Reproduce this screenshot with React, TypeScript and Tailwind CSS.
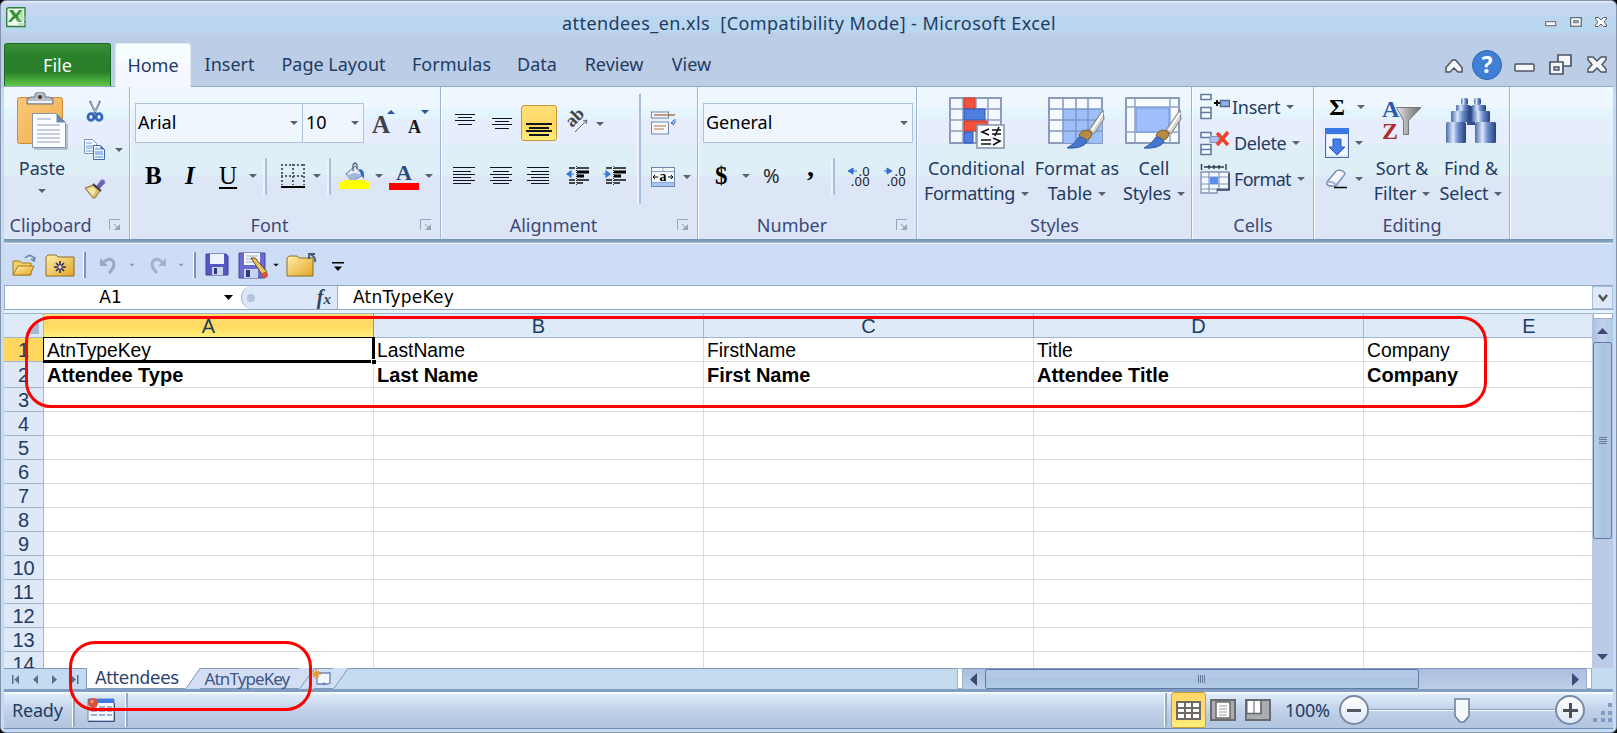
import React from "react";

const ui = "font-['Noto_Sans','Open_Sans',sans-serif]";

function Arrow({ className = "", color = "#5a6270" }: { className?: string; color?: string }) {
  return (
    <svg className={`block h-[4px] w-[8px] shrink-0 ${className}`} viewBox="0 0 8 4">
      <path d="M0 0h8L4 4z" fill={color} />
    </svg>
  );
}

function Launcher() {
  return (
    <svg className="block h-[12px] w-[12px]" viewBox="0 0 12 12" fill="none">
      <path d="M.5 11V.5H11" stroke="#9aa6b8" />
      <path d="M5 5l4 4" stroke="#8d97a8" />
      <path d="M11 5v6H5z" fill="#9aa3b2" />
    </svg>
  );
}

function Group({ label, width, launcher, labelClass = "", children }: { label: string; width: string; launcher?: boolean; labelClass?: string; children: React.ReactNode }) {
  return (
    <div className={`flex h-[152px] shrink-0 border-r border-white/80 ${width}`}>
      <div className="flex w-full flex-col border-r border-[#9db5cf]">
        <div className="h-[122px]">{children}</div>
        <div className="flex h-[30px] items-center pt-[2px]">
          <span className={`flex-1 text-center text-[18px] leading-[26px] text-[#3a4a78] ${labelClass}`}>{label}</span>
          {launcher && <div className="mr-[8px]"><Launcher /></div>}
        </div>
      </div>
    </div>
  );
}

function VSep({ className }: { className: string }) {
  return <div className={`w-[4px] shrink-0 border-r-2 border-l-2 border-r-[#a9bedb] border-l-[#f2f0fa] ${className}`} />;
}

function PasteIcon() {
  return (
    <svg className="block h-[58px] w-[52px]" viewBox="0 0 52 58">
      <defs>
        <linearGradient id="clip" x1="0" x2="1" y1="0" y2="1"><stop offset="0" stopColor="#fbc878" /><stop offset="1" stopColor="#eeaf52" /></linearGradient>
      </defs>
      <rect x="1.500" y="5.500" width="45" height="46" rx="2" fill="url(#clip)" stroke="#c98d3c" />
      <path d="M11 12V7l4-2h4V2l3-2h4l3 2v3h4l4 2v5z" fill="#b8bfca" stroke="#6d7480" />
      <circle cx="24" cy="5" r="2" fill="#4a3020" />
      <path d="M12 10h24" stroke="#eef1f5" strokeWidth="2" />
      <path d="M16.500 21.500h24l9 9v25h-33z" fill="#fbfcff" stroke="#8795aa" />
      <path d="M40.500 21.500v9h9z" fill="#6e86a8" />
      <path d="M21 27h14M21 33h23M21 38h23M21 42h23M21 46h23M21 50h23" stroke="#b3bfd3" strokeWidth="1.500" />
      <path d="M18 57h33V32" stroke="#8a93a5" fill="none" />
    </svg>
  );
}

function CutIcon() {
  return (
    <svg className="block h-[22px] w-[22px]" viewBox="0 0 22 22" fill="none">
      <path d="M6 1l6 13M16 1l-6 13" stroke="#5e7398" strokeWidth="2" />
      <path d="M7 2l4 10M15 2l-4 10" stroke="#dbe5f3" strokeWidth=".7" />
      <ellipse cx="7" cy="17" rx="3" ry="3.300" stroke="#3264bd" strokeWidth="2.800" />
      <ellipse cx="15" cy="17" rx="3" ry="3.300" stroke="#3264bd" strokeWidth="2.800" />
    </svg>
  );
}

function CopyIcon() {
  return (
    <svg className="block h-[22px] w-[22px]" viewBox="0 0 22 22">
      <path d="M.5.500h8l4 4v10H.5z" fill="#f7faff" stroke="#7d95bb" />
      <path d="M2 4h6M2 7h8M2 9h8M2 12h8" stroke="#6e9ad8" />
      <path d="M9.500 6.500h7l4 4v10h-11z" fill="#eef4ff" stroke="#3f6bb5" />
      <path d="M11 10h5M11 13h8M11 15h8M11 18h8" stroke="#5289d8" />
      <path d="M16.500 6.500v4h4z" fill="#3f6bb5" />
    </svg>
  );
}

function BrushIcon() {
  return (
    <svg className="block h-[20px] w-[22px]" viewBox="0 0 22 20">
      <path d="M12 8l5-7 3 0 1 3-7 7z" fill="#6a62b8" stroke="#8b84cc" />
      <path d="M1 9l8-3 7 6-5 7H9z" fill="#d9bd6a" stroke="#8c7433" />
      <path d="M3 10l6-2 3 3-3 6z" fill="#f6e6a5" />
      <path d="M9 5l8 7" stroke="#3c3b52" strokeWidth="2" />
    </svg>
  );
}

function BorderIcon() {
  return (
    <svg className="block h-[24px] w-[24px]" viewBox="0 0 24 24">
      <path d="M0 1h24M0 12h24" stroke="#555d68" strokeWidth="2" strokeDasharray="2 2" />
      <path d="M1 0v21M12 0v21M23 0v21" stroke="#555d68" strokeWidth="2" strokeDasharray="2 2" />
      <path d="M0 23h24" stroke="#000" strokeWidth="2" />
    </svg>
  );
}

function BucketIcon() {
  return (
    <svg className="block h-[28px] w-[30px]" viewBox="0 0 30 28">
      <path d="M7 12L16 4l8 9-11 6z" fill="#dfe9f8" stroke="#4d6d9f" />
      <path d="M8 13l8-2 7 2-10 6z" fill="#9fb9de" />
      <path d="M14 9V3q2-4 4 0v4" fill="none" stroke="#555f74" strokeWidth="1.300" />
      <path d="M20 7q6-1 5 10l-3-4z" fill="#2f6bd0" />
      <path d="M0 20h4l1-2h22v2h3v7H0z" fill="#ff0" />
    </svg>
  );
}

function Lines({ rows, w, h, sw = 1.3 }: { rows: number[][]; w: number; h: number; sw?: number }) {
  return (
    <svg className="block shrink-0" width={w} height={h} viewBox={`0 0 ${w} ${h}`} shapeRendering="crispEdges">
      {rows.map(([x, y, l], i) => (
        <rect key={i} x={x} y={y} width={l} height={sw} fill="#10141c" />
      ))}
    </svg>
  );
}

function OrientIcon() {
  return (
    <svg className="block h-[22px] w-[24px] overflow-visible" viewBox="0 0 24 22">
      <text x="0" y="0" transform="translate(6 17) rotate(-45)" fontFamily="Liberation Serif" fontWeight="bold" fontSize="18" fill="#444">ab</text>
      <path d="M9 21L21 9M21 9l-4 1M21 9l-1 4" stroke="#666" fill="none" />
    </svg>
  );
}

function IndentIcon({ right }: { right?: boolean }) {
  return (
    <svg className="block h-[20px] w-[24px] shrink-0" viewBox="0 0 24 20">
      <path d="M3 2h6M11 2h12M3 14h6M11 14h12M3 17h6M11 17h6" stroke="#111" strokeWidth="1.300" />
      <path d="M11 6h12M11 10h7" stroke="#000" strokeWidth="3" />
      <path d="M10.500 0v20" stroke="#333" strokeDasharray="1 1" />
      {right ? <path d="M0 8h4M3 5l4 3-4 3z" stroke="#3b75d8" fill="#3b75d8" strokeWidth="1.200" /> : <path d="M8 8H3M5 5L1 8l4 3z" stroke="#3b75d8" fill="#3b75d8" strokeWidth="1.200" />}
    </svg>
  );
}

function WrapIcon() {
  return (
    <svg className="block h-[24px] w-[25px]" viewBox="0 0 25 24" fill="none">
      <rect x=".5" y="1" width="17" height="6" fill="#f5f8ff" stroke="#7589a9" />
      <path d="M3 4h21" stroke="#9c5a2c" strokeWidth="1.200" />
      <rect x=".5" y="11" width="17" height="12" fill="#f5f8ff" stroke="#7589a9" />
      <path d="M3 15h12M3 18h10" stroke="#b9763f" strokeWidth="1.200" />
      <path d="M24 8v4h-3M23 9l-3 3 3 2" stroke="#3764b0" />
    </svg>
  );
}

function MergeIcon() {
  return (
    <svg className="block h-[20px] w-[24px] overflow-visible" viewBox="0 0 24 20">
      <rect x=".5" y=".5" width="23" height="19" fill="#f4f8ff" stroke="#7188ad" />
      <path d="M1 4.500h22M1 15.500h22M12 1v4M12 15v4" stroke="#88a5d5" />
      <path d="M1 16h22v3H1z" fill="#a9c6f3" />
      <path d="M2 10h5M17 10h5M4 8l-2 2 2 2M20 8l2 2-2 2" stroke="#000" fill="none" />
      <text x="8.500" y="14" fontFamily="Liberation Serif" fontWeight="bold" fontSize="14">a</text>
    </svg>
  );
}

function DecimalIcon({ right }: { right?: boolean }) {
  return (
    <div className="flex h-[20px] w-[22px] shrink-0 flex-col text-[13px] leading-[10px] tracking-[0.300px] text-[#222]">
      <div className="flex h-[10px] items-center justify-between">
        <svg className="block h-[8px] w-[9px]" viewBox="0 0 9 8">
          {right ? <path d="M0 4h5M3 1l5 3-5 3z" stroke="#2e68cc" fill="#3b75d8" /> : <path d="M9 4H4M5 1L0 4l5 3z" stroke="#2e68cc" fill="#3b75d8" />}
        </svg>
        <span>.0</span>
      </div>
      <span className="text-right">.00</span>
    </div>
  );
}

function PaintBrush() {
  return (
    <g>
      <path d="M55 13L41 33l5 4L56 22z" fill="#d2d2cf" stroke="#777b80" />
      <path d="M55 16L44 33" stroke="#fff" strokeWidth="2" />
      <path d="M31 38q4-7 11-4 4 3-1 8l-6 3z" fill="#b58a43" stroke="#7d5c28" />
      <path d="M31 40q6 0 8 5-5 7-20 6 7-3 12-11z" fill="#4478cf" stroke="#2d5aa8" />
    </g>
  );
}

function CondIcon() {
  return (
    <svg className="block h-[52px] w-[56px]" viewBox="0 0 56 52">
      <rect x="1" y="1" width="51" height="45" fill="#f5f8fe" stroke="#8a9bbb" strokeWidth="2" />
      <path d="M14 1v45M27 1v45M39 1v45M1 12h51M1 23h51M1 34h51" stroke="#8b9dbf" strokeWidth="1.500" />
      <path d="M15 1h11v11H15z" fill="#f4503c" stroke="#d73423" />
      <path d="M15 12h21v11H15z" fill="#4f7ee0" stroke="#2a56ba" />
      <path d="M15 24h23v10H15z" fill="#f4503c" stroke="#d73423" />
      <path d="M15 35h9v11h-9z" fill="#4f7ee0" stroke="#2a56ba" />
      <rect x="28" y="28" width="27" height="23" fill="#fbfcff" stroke="#8390a5" strokeWidth="1.500" />
      <path d="M40 32l-7 3 7 3M32 43h10M32 47h10M43 33h9M43 37h9M50 30l-4 9M44 41l7 3-7 4" stroke="#111" fill="none" strokeWidth="1.600" />
    </svg>
  );
}

function TableIcon() {
  return (
    <svg className="block h-[52px] w-[58px]" viewBox="0 0 58 52">
      <rect x="1" y="1" width="53" height="45" fill="#f7faff" stroke="#8a9bbb" strokeWidth="2" />
      <path d="M15 12h39v34H15z" fill="#9dc0fb" />
      <path d="M15 1v45M28 1v45M40 1v45M1 12h53M1 23h53M1 34h53" stroke="#7d97c8" strokeWidth="1.500" />
      <PaintBrush />
    </svg>
  );
}

function CellStyleIcon() {
  return (
    <svg className="block h-[52px] w-[58px]" viewBox="0 0 58 52">
      <rect x="1" y="1" width="53" height="45" fill="#f7faff" stroke="#8a9bbb" strokeWidth="2" />
      <path d="M10 1v45M45 1v45M1 10h53M1 35h53" stroke="#93a5c6" strokeWidth="1.500" />
      <path d="M11 11h33v24H11z" fill="#9fbffa" stroke="#6d93dc" />
      <PaintBrush />
    </svg>
  );
}

function InsertCells() {
  return (
    <svg className="block h-[27px] w-[30px]" viewBox="0 0 30 27">
      <path d="M1 1.500h10v5H1zM1 14.500h10v5H1zM1 19.500h10v6H1z" fill="#f7faff" stroke="#64799b" strokeWidth="1.600" />
      <path d="M14 10h6M17 7v6" stroke="#000" strokeWidth="1.800" />
      <path d="M20.500 7.500h9v6h-9z" fill="#8fb2ef" stroke="#56698a" strokeWidth="1.500" />
    </svg>
  );
}

function DeleteCells() {
  return (
    <svg className="block h-[25px] w-[30px]" viewBox="0 0 30 25">
      <path d="M1 1.500h10v5H1zM1 13.500h10v5H1zM1 18.500h10v5H1z" fill="#f7faff" stroke="#64799b" strokeWidth="1.600" />
      <path d="M10 5.500h9v6h-9z" fill="#a9c4f3" stroke="#7f96be" />
      <path d="M17 2l11 12M28 1L17 14" stroke="#f0432a" strokeWidth="3.500" />
    </svg>
  );
}

function FormatCells() {
  return (
    <svg className="block h-[30px] w-[30px]" viewBox="0 0 30 30">
      <path d="M1.500 0v6M26 0v6M4 3h20M9 1v4M14 1v4M19 1v4" stroke="#2d3a4d" strokeWidth="1.400" />
      <path d="M1 8h28v17H17v4H1z" fill="#f3f7ff" stroke="#8496b3" strokeWidth="1.400" />
      <path d="M9 8v20M19 8v17M1 13h28M1 20h28M1 25h28" stroke="#8496b3" strokeWidth="1.200" />
      <path d="M10 13h8v7h-8z" fill="#5a8df0" />
      <path d="M17 26h12V9" fill="none" stroke="#33435b" strokeWidth="1.500" />
    </svg>
  );
}

function FillIcon() {
  return (
    <svg className="block h-[30px] w-[24px]" viewBox="0 0 24 30">
      <rect x=".5" y=".5" width="23" height="29" fill="#dfe9fc" stroke="#4c6ba5" />
      <path d="M0 0h24v6H0z" fill="#3c77e6" />
      <path d="M2 7h20v20H2z" fill="#fff" opacity=".6" />
      <path d="M8 11h8v8h4l-8 8-8-8h4z" fill="#477fe9" stroke="#2a5cc0" />
    </svg>
  );
}

function EraserIcon() {
  return (
    <svg className="block h-[20px] w-[24px]" viewBox="0 0 24 20">
      <path d="M2 13L11 2q4-2 8 1l1 2-9 12H5q-4-1-3-4z" fill="#f4f7fd" stroke="#6f87b0" strokeWidth="1.300" />
      <path d="M3 13q5-1 8 3L20 5" fill="none" stroke="#8fa6cf" strokeWidth="1.500" />
      <path d="M9 18.500h13" stroke="#000" strokeWidth="1.500" />
    </svg>
  );
}

function SortIcon() {
  return (
    <div className="flex h-[40px] w-[40px] font-['Liberation_Serif'] text-[24px] font-bold">
      <div className="flex w-[15px] flex-col">
        <span className="h-[20px] leading-[18px] text-[#2b58ae]">A</span>
        <span className="h-[20px] leading-[22px] text-[#ac2d2a]">Z</span>
      </div>
      <svg className="mt-[7px] -ml-px block h-[28px] w-[26px] shrink-0" viewBox="0 0 26 28">
        <defs>
          <linearGradient id="funnel"><stop offset="0" stopColor="#e9e9e9" /><stop offset=".5" stopColor="#a3a3a3" /><stop offset="1" stopColor="#6c6c6c" /></linearGradient>
        </defs>
        <path d="M.5.500h24.500L12.500 13.500v14h-5v-14z" fill="url(#funnel)" stroke="#777" />
      </svg>
    </div>
  );
}

function FindIcon() {
  return (
    <svg className="block h-[47px] w-[52px]" viewBox="0 0 52 47">
      <defs>
        <linearGradient id="bino"><stop offset="0" stopColor="#4c6ba8" /><stop offset=".35" stopColor="#dbe7fb" /><stop offset=".6" stopColor="#6d8fd0" /><stop offset="1" stopColor="#263f78" /></linearGradient>
      </defs>
      <path d="M22 9h8v19h-8z" fill="#324f8c" />
      <rect x="16" y="1" width="7" height="7" rx="2" fill="url(#bino)" />
      <rect x="29" y="1" width="7" height="7" rx="2" fill="url(#bino)" />
      <rect x="11" y="8" width="14" height="6" rx="1" fill="url(#bino)" />
      <rect x="27" y="8" width="14" height="6" rx="1" fill="url(#bino)" />
      <rect x="6" y="14" width="19" height="11" rx="1" fill="url(#bino)" />
      <rect x="27" y="14" width="18" height="11" rx="1" fill="url(#bino)" />
      <rect x="1" y="25" width="20" height="21" rx="1.500" fill="url(#bino)" />
      <rect x="30" y="25" width="21" height="21" rx="1.500" fill="url(#bino)" />
    </svg>
  );
}

function BigButton({ icon, top, bottom, width, pt, bottomClass = "" }: { icon: React.ReactNode; top: string; bottom: string; width: string; pt: string; bottomClass?: string }) {
  return (
    <div className={`flex h-[122px] shrink-0 flex-col items-center whitespace-nowrap text-[18px] leading-[25px] text-[#1e3c63] ${width}`}>
      <div className={`h-[69px] ${pt}`}>{icon}</div>
      <div>{top}</div>
      <div className="flex items-center">
        <span className={bottomClass}>{bottom}</span>
        <Arrow className="ml-[6px]" />
      </div>
    </div>
  );
}

function Ribbon() {
  return (
    <div className="flex h-[152px] bg-[linear-gradient(to_bottom,#f0f7fe_0px,#eef7fe_20px,#e3f4fd_24px,#e3f5fe_30px,#e6edfc_33px,#e6edfc_56px,#deeef7_60px,#dfeff6_86px,#dde6f7_92px,#dde6f7_152px)]">
      <Group label="Clipboard" width="w-[127px]" launcher labelClass="pr-[12px]">
        <div className="flex">
          <div className="flex w-[76px] flex-col items-center pt-[5px]">
            <PasteIcon />
            <span className="mt-[6px] text-[18px] leading-[25px] text-[#1e3c63]">Paste</span>
            <Arrow className="mt-[8px]" />
          </div>
          <div className="flex w-[27px] flex-col pt-[13px] pl-[4px]">
            <CutIcon />
            <div className="mt-[17px]"><CopyIcon /></div>
            <div className="mt-[18px]"><BrushIcon /></div>
          </div>
          <Arrow className="mt-[61px] ml-[8px]" />
        </div>
      </Group>

      <Group label="Font" width="w-[311px]" launcher labelClass="pr-[12px]">
        <div className="flex h-[56px] items-end pl-[4px]">
          <div className="flex h-[40px] w-[168px] items-center justify-between border border-[#b0c4de] bg-[#f0f6fe] pr-[4px] pl-[2px] text-[18px] leading-[26px] text-black">
            <span className="pb-[3px]">Arial</span><Arrow />
          </div>
          <div className="-ml-px flex h-[40px] w-[62px] items-center justify-between border border-[#b0c4de] bg-[#f0f6fe] pr-[4px] pl-[3px] text-[18px] leading-[26px] text-black">
            <span className="pb-[3px]">10</span><Arrow />
          </div>
          <div className="ml-[8px] flex h-[33px] items-start self-end">
            <span className="font-['Liberation_Serif'] text-[25px] leading-[30px] font-bold text-[#3d4149]">A</span>
            <Arrow className="-ml-[3px] rotate-180" color="#2a52a0" />
          </div>
          <div className="ml-[13px] flex h-[33px] items-start self-end">
            <span className="pt-[4px] font-['Liberation_Serif'] text-[18px] leading-[26px] font-bold text-[#15181d]">A</span>
            <Arrow color="#2a52a0" />
          </div>
        </div>
        <div className="flex h-[66px] items-center font-['Liberation_Serif'] text-[25px]">
          <span className="ml-[14px] w-[18px] font-bold">B</span>
          <span className="ml-[22px] w-[14px] font-bold italic">I</span>
          <span className="ml-[20px] w-[18px] underline underline-offset-[3px]">U</span>
          <Arrow className="ml-[12px]" />
          <VSep className="ml-[6px] h-[37px]" />
          <div className="ml-[14px]"><BorderIcon /></div>
          <Arrow className="ml-[8px]" />
          <VSep className="ml-[6px] h-[37px]" />
          <div className="ml-[8px]"><BucketIcon /></div>
          <Arrow className="ml-[6px]" />
          <div className="ml-[6px] flex w-[30px] flex-col items-center">
            <span className="text-[22px] leading-[21px] font-bold text-[#2c4a80]">A</span>
            <div className="h-[7px] w-[30px] bg-[#f00]" />
          </div>
          <Arrow className="ml-[6px]" />
        </div>
      </Group>

      <Group label="Alignment" width="w-[257px]" launcher labelClass="pr-[12px]">
        <div className="flex">
          <div className="w-[195px]">
            <div className="flex h-[66px] items-center">
              <div className="ml-[13px]"><Lines w={20} h={12} rows={[[0, 0, 20], [3, 3, 14], [0, 6, 20], [3, 10, 14]]} /></div>
              <div className="mt-[8px] ml-[17px]"><Lines w={20} h={12} rows={[[0, 0, 20], [3, 3, 14], [0, 6, 20], [3, 10, 14]]} /></div>
              <div className="mt-[6px] ml-[9px] flex h-[36px] w-[36px] items-end justify-center rounded-[3px] border border-[#c6963c] bg-[linear-gradient(#ffe07a,#ffd862_60%,#fff07c)] pb-[3px]">
                <Lines w={26} h={14} sw={2} rows={[[0, 0, 26], [3, 4, 20], [0, 7, 26], [3, 11, 20]]} />
              </div>
              <div className="mt-[4px] ml-[9px]"><OrientIcon /></div>
              <Arrow className="mt-[7px] ml-[6px]" />
            </div>
            <div className="flex h-[46px] items-center">
              <div className="ml-[11px]"><Lines w={22} h={18} rows={[[0, 0, 22], [0, 4, 18], [0, 7, 22], [0, 10, 18], [0, 13, 22], [0, 16, 18]]} /></div>
              <div className="ml-[15px]"><Lines w={22} h={18} rows={[[0, 0, 22], [3, 4, 16], [0, 7, 22], [3, 10, 16], [0, 13, 22], [3, 16, 16]]} /></div>
              <div className="ml-[15px]"><Lines w={22} h={18} rows={[[0, 0, 22], [4, 4, 18], [0, 7, 22], [4, 10, 18], [0, 13, 22], [4, 16, 18]]} /></div>
              <div className="ml-[17px]"><IndentIcon /></div>
              <div className="ml-[13px]"><IndentIcon right /></div>
            </div>
          </div>
          <VSep className="mt-[7px] h-[110px]" />
          <div className="ml-[10px] pt-[24px]">
            <WrapIcon />
            <div className="mt-[32px] flex items-center">
              <MergeIcon />
              <Arrow className="ml-[8px]" />
            </div>
          </div>
        </div>
      </Group>

      <Group label="Number" width="w-[219px]" launcher labelClass="pr-[11px]">
        <div className="flex h-[56px] items-end pl-[4px]">
          <div className="flex h-[40px] w-[210px] items-center justify-between border border-[#b0c4de] bg-[#f0f6fe] pr-[4px] pl-[2px] text-[18px] leading-[26px] text-black">
            <span className="pb-[3px]">General</span><Arrow />
          </div>
        </div>
        <div className="flex h-[66px] items-center">
          <span className="ml-[16px] w-[12px] font-['Liberation_Serif'] text-[25px] font-bold">$</span>
          <Arrow className="ml-[15px]" />
          <span className="ml-[13px] w-[19px] text-[20px] text-[#2b2b2b]">%</span>
          <span className="-mt-[18px] ml-[25px] w-[10px] font-['Liberation_Serif'] text-[28px] leading-[32px] font-bold">,</span>
          <VSep className="ml-[14px] h-[37px]" />
          <div className="ml-[13px]"><DecimalIcon /></div>
          <div className="ml-[14px]"><DecimalIcon right /></div>
        </div>
      </Group>

      <Group label="Styles" width="w-[275px]">
        <div className="flex pl-px">
          <BigButton width="w-[115px]" pt="pt-[10px]" icon={<CondIcon />} top="Conditional" bottom="Formatting" bottomClass="tracking-[-0.350px]" />
          <BigButton width="w-[86px]" pt="pt-[10px]" icon={<TableIcon />} top="Format as" bottom="Table" />
          <BigButton width="w-[68px]" pt="pt-[10px]" icon={<CellStyleIcon />} top="Cell" bottom="Styles" bottomClass="tracking-[-0.200px]" />
        </div>
      </Group>

      <Group label="Cells" width="w-[122px]">
        <div className="pl-[7px] text-[18px] leading-[36px] text-[#1e3c63]">
          <div className="flex h-[39px] items-center"><InsertCells /><span className="ml-[2px] tracking-[-0.300px]">Insert</span><Arrow className="ml-[6px]" /></div>
          <div className="flex h-[34px] items-center"><DeleteCells /><span className="ml-[4px] tracking-[-0.400px]">Delete</span><Arrow className="ml-[6px]" /></div>
          <div className="flex h-[38px] items-center"><FormatCells /><span className="ml-[4px] tracking-[-0.700px]">Format</span><Arrow className="ml-[6px]" /></div>
        </div>
      </Group>

      <Group label="Editing" width="w-[196px]">
        <div className="flex">
          <div className="w-[52px] pl-[10px]">
            <div className="flex h-[40px] items-center"><span className="w-[24px] text-center font-['Liberation_Serif'] text-[24px] font-bold">Σ</span><Arrow className="ml-[8px]" /></div>
            <div className="flex h-[32px] items-center"><FillIcon /><Arrow className="ml-[6px]" /></div>
            <div className="flex h-[40px] items-center"><EraserIcon /><Arrow className="ml-[6px]" /></div>
          </div>
          <BigButton width="w-[70px]" pt="pt-[13px]" icon={<SortIcon />} top="Sort &" bottom="Filter" />
          <BigButton width="w-[68px]" pt="pt-[10px]" icon={<FindIcon />} top="Find &" bottom="Select" bottomClass="tracking-[-0.200px]" />
        </div>
      </Group>
    </div>
  );
}

function FolderIcon({ w, children }: { w: number; children?: React.ReactNode }) {
  return (
    <svg className="block shrink-0" width={w} height="24" viewBox={`0 0 ${w} 24`}>
      <defs>
        <linearGradient id="fold" x1="0" y1="0" x2="1" y2="1"><stop offset="0" stopColor="#fff0a8" /><stop offset="1" stopColor="#e3a526" /></linearGradient>
      </defs>
      {children}
    </svg>
  );
}

function QuickAccess() {
  return (
    <div className="flex h-[42px] items-center border-t border-[#eaf2fd] bg-[#cdddf6] pt-px">
      <div className="ml-[8px]">
        <FolderIcon w={24}>
          <path d="M1 22V8h7l2 2h9v12z" fill="#f3cf68" stroke="#a37a1d" />
          <path d="M1 22l5-9h16l-4 9z" fill="url(#fold)" stroke="#a37a1d" />
          <path d="M13 5q5-5 9 0v3M19 6l3 2 1-4" fill="none" stroke="#5a7fae" strokeWidth="1.500" />
        </FolderIcon>
      </div>
      <div className="ml-[9px]">
        <FolderIcon w={30}>
          <path d="M1 4l2-2h8l2 2h16v19H1z" fill="url(#fold)" stroke="#8f6d22" />
          <path d="M15 8v12M9 14h12M11 10l8 8M19 10l-8 8" stroke="#27296f" strokeWidth="1.600" />
          <circle cx="15" cy="14" r="1.800" fill="#ffe9a0" />
        </FolderIcon>
      </div>
      <div className="ml-[8px] h-[26px] w-[3px] border-r-2 border-l border-r-[#8592a8] border-l-white" />
      <svg className="ml-[13px] block h-[18px] w-[18px]" viewBox="0 0 18 18" fill="none"><path d="M5 6q5-5 9-1 3 5-4 12" stroke="#98a8c2" strokeWidth="3" /><path d="M1 2v8h8z" fill="#98a8c2" /></svg>
      <Arrow className="ml-[11px] scale-75" color="#8d9ab0" />
      <svg className="ml-[13px] block h-[18px] w-[18px]" viewBox="0 0 18 18" fill="none"><path d="M13 6Q8 1 4 5q-3 5 4 12" stroke="#a3b2ca" strokeWidth="3" /><path d="M17 2v8H9z" fill="#a3b2ca" /></svg>
      <Arrow className="ml-[10px] scale-75" color="#8d9ab0" />
      <div className="ml-[8px] h-[26px] w-[3px] border-r-2 border-l border-r-[#8592a8] border-l-white" />
      <svg className="ml-[9px] block h-[24px] w-[24px]" viewBox="0 0 24 24">
        <path d="M1 1h20l2 2v19H1z" fill="#5558c2" stroke="#3c3d98" />
        <path d="M5 1h14v10H5z" fill="#eef3fc" />
        <path d="M7 14h11v8H7z" fill="#cdd5ea" /><path d="M9 15h3v6H9z" fill="#34357f" />
      </svg>
      <svg className="ml-[9px] block h-[27px] w-[31px]" viewBox="0 0 31 27">
        <path d="M1 1h26v25H1z" fill="#6a6cd0" stroke="#4546a4" />
        <path d="M6 1h16v12H6z" fill="#f6f8fc" /><path d="M8 4h12M8 7h12M8 10h12" stroke="#a4abc0" />
        <path d="M6 17h14v9H6z" fill="#c9d2ee" /><path d="M8 18h4v7H8z" fill="#34357f" />
        <path d="M13 6l4 0 12 14-4 4z" fill="#e9c763" stroke="#5b4a25" />
        <circle cx="27" cy="23" r="3" fill="#d0563e" />
      </svg>
      <Arrow className="ml-[3px] scale-75" color="#111" />
      <div className="ml-[6px]">
        <FolderIcon w={31}>
          <path d="M1 5l2-2h8l2 2h14v18H1z" fill="url(#fold)" stroke="#8f6d22" />
          <path d="M29 9q1-5-4-7M23 6V1h6" fill="none" stroke="#3f5878" strokeWidth="1.800" />
        </FolderIcon>
      </div>
      <svg className="mt-[3px] ml-[15px] block h-[9px] w-[12px]" viewBox="0 0 12 9"><path d="M0 0h12v1.500H0zM2 4.500h8L6 9z" fill="#000" /></svg>
    </div>
  );
}

function FormulaBar() {
  return (
    <div className="flex h-[25px] border-y border-[#8fa6c6] bg-white font-['DejaVu_Sans','Liberation_Sans',sans-serif] text-[17px] text-black">
      <div className="flex w-[237px] items-center border-l border-[#9db2d0]">
        <span className="w-[211px] text-center leading-[23px]">A1</span>
        <svg className="ml-[8px] block h-[5px] w-[9px]" viewBox="0 0 9 5"><path d="M0 0h9L4.500 5z" /></svg>
      </div>
      <div className="flex w-[97px] items-center justify-between rounded-l-full border-r border-l border-[#9db2d0] bg-[#dce8f9] pr-[6px] pl-[5px]">
        <div className="h-[8px] w-[8px] rounded-full bg-[#b4c4dc]" />
        <span className="font-['Liberation_Serif'] text-[20px] leading-[20px] font-bold text-[#33465f] italic">f<span className="text-[15px]">x</span></span>
      </div>
      <span className="ml-[15px] flex-1 leading-[23px] tracking-[0.250px]">AtnTypeKey</span>
      <div className="flex w-[21px] items-center justify-center border border-[#a9bedb] bg-[#dde9f8]">
        <svg className="block h-[8px] w-[10px]" viewBox="0 0 10 8"><path d="M1 1l4 5 4-5" fill="none" stroke="#555" strokeWidth="2.500" /></svg>
      </div>
    </div>
  );
}

const cols = ["w-[330px]", "w-[330px]", "w-[330px]", "w-[330px]", "flex-1"];
const letters = ["A", "B", "C", "D", "E"];
const data = [
  ["AtnTypeKey", "LastName", "FirstName", "Title", "Company"],
  ["Attendee Type", "Last Name", "First Name", "Attendee Title", "Company"],
];

function Sheet() {
  return (
    <div className="h-[355px] w-[1588px] overflow-hidden bg-white font-['Liberation_Sans',Arial,sans-serif] text-[19.300px]">
      <div className="flex h-[25px] border-t border-b border-[#9eb6ce] bg-[#dfeaf8] text-[20px] leading-[25px] text-[#1e3c63]">
        <div className="flex w-[40px] items-end justify-end border-r border-[#9eb6ce] pr-[4px] pb-[3px]">
          <svg className="block h-[14px] w-[14px]" viewBox="0 0 14 14"><path d="M14 0v14H0z" fill="#a9b9d3" /></svg>
        </div>
        {letters.map((l, i) => (
          <div key={i} className={`${cols[i]} text-center ${i === 0 ? "border-r border-[#c98f2d] bg-[linear-gradient(#ffe07b,#ffd95f_50%,#fff07c)]" : i < 4 ? "border-r border-[#9eb6ce]" : "pl-[102px]"}`}>
            {l}
          </div>
        ))}
      </div>
      {Array.from({ length: 14 }, (_, r) => (
        <div key={r} className={`flex ${r === 1 ? "h-[26px] leading-[27px]" : "h-[24px] leading-[25px]"}`}>
          <div className={`w-[40px] overflow-hidden border-r border-b border-[#9eb6ce] text-center text-[20px] text-[#1e3c63] ${r === 0 ? "bg-[#ffd75e]" : "bg-[#dfe8f7]"}`}>{r + 1}</div>
          {cols.map((c, i) => (
            <div key={i} className={`${c} border-b border-[#dadcdd] pl-[3px] whitespace-nowrap ${i < 4 ? "border-r" : ""} ${r === 1 ? "text-[20px] font-bold" : ""}`}>
              {r < 2 ? data[r][i] : ""}
            </div>
          ))}
        </div>
      ))}
    </div>
  );
}

function VScroll() {
  return (
    <div className="flex h-[355px] w-[21px] flex-col items-center bg-[#bccbe5]">
      <div className="h-[6px] w-[20px] border border-[#9eb3cf] bg-white" />
      <div className="flex h-[23px] w-full items-center justify-center bg-[linear-gradient(to_right,#aebfdc,#c3d1ec_50%,#aecbe4)]">
        <svg className="block h-[6px] w-[11px]" viewBox="0 0 11 6"><path d="M0 6L5.500 0 11 6z" fill="#3f4a77" /></svg>
      </div>
      <div className="flex h-[197px] w-[19px] items-center justify-center rounded-[2px] border border-[#5f7ba5] bg-[linear-gradient(to_right,#b9d0ea,#a8c4e0_50%,#b0c4e4)]">
        <div className="h-[8px] w-[8px] bg-[repeating-linear-gradient(#66799a_0px_1px,transparent_1px_2px)]" />
      </div>
      <div className="flex-1" />
      <svg className="mb-[8px] block h-[6px] w-[11px]" viewBox="0 0 11 6"><path d="M0 0h11L5.500 6z" fill="#3f4a77" /></svg>
    </div>
  );
}

function Slant({ left, right }: { left: string; right: string }) {
  return (
    <svg className="block h-[21px] w-[15px] shrink-0" viewBox="0 0 15 21">
      <path d="M0 0h15L1 20H0z" fill={left} />
      <path d="M15 0v20H1z" fill={right} />
      <path d="M15 .5L1 20.500" stroke="#7f98bd" />
    </svg>
  );
}

function SheetTabs() {
  return (
    <div className="flex h-[21px] bg-[#c5dcf0]">
      <div className="flex h-[21px] w-[83px] items-center border-t border-r border-[#7f98bd] pl-[8px]">
        <svg className="block h-[9px] w-[68px]" viewBox="0 0 68 9" fill="#566c90">
          <path d="M0 0h1.500v9H0zM7 0v9L2.500 4.500zM26 0v9l-5-4.500zM40 0v9l5-4.500zM59 0v9l5-4.500zM65 0h1.500v9H65z" />
        </svg>
      </div>
      <div className="flex w-[98px] items-center justify-center border-b border-[#7f98bd] bg-white pl-[2px] font-['DejaVu_Sans'] text-[17px] leading-[20px] whitespace-nowrap text-[#27406c]">
        <span className="tracking-[-0.300px]">Attendees</span>
      </div>
      <Slant left="#ffffff" right="#d3def4" />
      <div className="flex w-[99px] items-center justify-center border-t border-b border-[#7f98bd] bg-[#d3def4] pr-[5px] text-[17px] leading-[20px] whitespace-nowrap text-[#3f5686]">
        <span className="tracking-[-0.900px]">AtnTypeKey</span>
      </div>
      <Slant left="#d3def4" right="#cfdff4" />
      <div className="w-[19px] border-t border-b border-[#7f98bd] bg-[#cfdff4]">
        <svg className="-ml-[2px] block h-[18px] w-[21px]" viewBox="0 0 21 18">
          <path d="M5 4h13v10l-3 1H5z" fill="#f5f8ff" stroke="#6f86ac" strokeWidth="1.300" />
          <path d="M9 16l3-3 3 3z" fill="#6f86ac" />
          <path d="M4 0v10M0 5h9M1 2l6 6M7 2L1 8" stroke="#e79a2b" strokeWidth="1.400" />
        </svg>
      </div>
      <Slant left="#cfdff4" right="#c5dcf0" />
      <div className="flex-1 border-t border-[#7f98bd]" />
      <div className="h-[21px] w-[6px] border border-[#9eb3cf] bg-white" />
      <div className="flex h-[21px] w-[623px] items-center border-t border-[#7f98bd] bg-[linear-gradient(#a9bedb,#bccfe8)]">
        <svg className="ml-[7px] block h-[13px] w-[7px]" viewBox="0 0 7 13"><path d="M7 0v13L0 6.500z" fill="#3b4a78" /></svg>
        <div className="ml-[8px] flex h-[20px] w-[434px] items-center justify-center rounded-[2px] border border-[#5f7ba5] bg-[linear-gradient(#b3c8e6,#b0c8e6_45%,#a8c4e0_50%,#b3cbe6)]">
          <div className="h-[8px] w-[8px] bg-[repeating-linear-gradient(to_right,#66799a_0px_1px,transparent_1px_2px)]" />
        </div>
        <svg className="ml-[153px] block h-[13px] w-[7px]" viewBox="0 0 7 13"><path d="M0 0v13l7-6.500z" fill="#3b4a78" /></svg>
      </div>
      <div className="h-[21px] w-[6px] border border-[#9eb3cf] bg-white" />
      <div className="w-[21px]" />
    </div>
  );
}

function StatusBar() {
  return (
    <div className="flex h-[36px] items-center bg-[linear-gradient(#ffffff_0px,#dbe9f8_3px,#d3e3f5_9px,#c8d7ec_14px,#bccde5_22px,#b2c6e0_36px)] text-[18px] text-[#1e3c63]">
      <span className="ml-[8px] w-[60px] tracking-[-0.200px]">Ready</span>
      <div className="h-[34px] w-[3px] border-r-2 border-l border-r-[#93a9c8] border-l-white" />
      <svg className="ml-[12px] block h-[24px] w-[28px]" viewBox="0 0 28 24">
        <path d="M1 1h26v22H1z" fill="#f5f8ff" stroke="#6c87b8" />
        <path d="M1 1h26v4H1z" fill="#3f79e3" />
        <path d="M4 9h6M12 9h6M20 9h5M4 13h6M12 13h6M20 13h5M4 17h6M12 17h6M20 17h5" stroke="#9fb2d4" strokeWidth="2" />
        <path d="M1 23.500h26.500V5" stroke="#3a4d75" fill="none" />
        <circle cx="6" cy="5" r="5" fill="#dc5236" /><circle cx="5" cy="3.500" r="1.500" fill="#f6a58e" />
      </svg>
      <div className="ml-[10px] h-[34px] w-[3px] border-r-2 border-l border-r-[#93a9c8] border-l-white" />
      <div className="flex-1" />
      <div className="h-[34px] w-[3px] border-r-2 border-l border-r-[#93a9c8] border-l-white" />
      <div className="ml-[4px] flex h-[36px] w-[35px] items-center justify-center rounded-[3px] border border-[#d09c3a] bg-[linear-gradient(#ffd86a,#ffdc6a_60%,#fff07c)]">
        <svg className="block h-[19px] w-[25px]" viewBox="0 0 25 19"><path d="M0 0h25v19H0z" fill="#6d6a63" /><path d="M2 2h6v4H2zM10 2h5v4h-5zM17 2h6v4h-6zM2 8h6v3H2zM10 8h5v3h-5zM17 8h6v3h-6zM2 13h6v4H2zM10 13h5v4h-5zM17 13h6v4h-6z" fill="#fff" /></svg>
      </div>
      <svg className="ml-[4px] block h-[22px] w-[26px]" viewBox="0 0 26 22"><path d="M0 0h26v22H0z" fill="#6b6b6e" /><path d="M2 2h22v18H2z" fill="#a9acb2" /><path d="M6 3h14v16H6z" fill="#fff" stroke="#6b6b6e" strokeWidth="1.500" /><path d="M9 7h8M9 10h8M9 13h8M9 16h8" stroke="#999" /></svg>
      <svg className="ml-[9px] block h-[22px] w-[26px]" viewBox="0 0 26 22"><path d="M0 0h26v22H0z" fill="#6b6b6e" /><path d="M2 2h22v18H2z" fill="#a9acb2" /><path d="M3 2h5v12H3zM10 2h5v12h-5z" fill="#fff" /><path d="M2 14.500h14V2" fill="none" stroke="#666" strokeWidth="1.500" /></svg>
      <span className="ml-[14px] w-[54px] tracking-[-0.300px]">100%</span>
      <div className="flex h-[30px] w-[30px] items-center justify-center rounded-full border-2 border-[#7a8aa6] bg-[linear-gradient(#fff,#dfe8f6)]">
        <div className="h-[3px] w-[14px] bg-[#55585e]" />
      </div>
      <div className="h-[2px] w-[85px] border-b border-white bg-[#8d9fbf]" />
      <svg className="block h-[25px] w-[16px]" viewBox="0 0 16 25"><path d="M1 1h14v17l-5 6H6l-5-6z" fill="#f5f8fd" stroke="#6c7c98" strokeWidth="1.500" /></svg>
      <div className="h-[2px] w-[85px] border-b border-white bg-[#8d9fbf]" />
      <div className="flex h-[30px] w-[30px] items-center justify-center rounded-full border-2 border-[#7a8aa6] bg-[linear-gradient(#fff,#dfe8f6)]">
        <svg className="block h-[15px] w-[15px]" viewBox="0 0 15 15"><path d="M6 0h3v6h6v3H9v6H6V9H0V6h6z" fill="#4c4f55" /></svg>
      </div>
      <svg className="mt-[4px] mr-[1px] ml-[8px] block h-[19px] w-[19px]" viewBox="0 0 19 19"><path d="M15 0h4v4h-4zM15 8h4v4h-4zM8 8h4v4H8zM0 15h4v4H0zM8 15h4v4H8zM15 15h4v4h-4z" fill="#7f9cc4" /></svg>
    </div>
  );
}

const tabs: [string, string, string][] = [
  ["Insert", "ml-[14px]", "w-[49px]"],
  ["Page Layout", "ml-[28px]", "w-[103px]"],
  ["Formulas", "ml-[28px]", "w-[77px]"],
  ["Data", "ml-[28px]", "w-[38px]"],
  ["Review", "ml-[29px]", "w-[58px]"],
  ["View", "ml-[28px]", "w-[41px]"],
];

function TabRow() {
  return (
    <div className="flex h-[43px] items-end text-[18px] text-[#1e3c63]">
      <div className="flex h-[43px] w-[107px] items-center justify-center rounded-t-[3px] border border-b-0 border-[#1d6a2a] bg-[linear-gradient(#3d9238_0px,#29822c_12px,#2a7d28_28px,#3fa035_34px,#66cc45_43px)] text-white">File</div>
      <div className="z-10 -mb-px ml-[4px] flex h-[44px] w-[76px] items-center justify-center rounded-t-[3px] border border-b-0 border-[#dfeaf7] bg-[linear-gradient(#f5fefe_0px,#f5fdff_18px,#f5f6fe_19px,#f5f7fe_43px)]">Home</div>
      {tabs.map(([t, m, w]) => (
        <div key={t} className={`flex h-[43px] items-center justify-center whitespace-nowrap ${m} ${w}`}>{t}</div>
      ))}
      <div className="flex-1" />
      <div className="mr-[6px] flex h-[43px] items-center">
        <svg className="mt-[3px] block h-[14px] w-[18px]" viewBox="0 0 18 14"><path d="M1 8.500L7.500 1h3L17 8.500V13h-4L9 9l-4 4H1z" fill="#f5f7fb" stroke="#4d5563" strokeWidth="1.500" /></svg>
        <div className="ml-[9px] flex h-[30px] w-[30px] items-center justify-center rounded-full border border-[#2f62b5] bg-[#3f7fd4] text-[23px] leading-none font-bold text-white">?</div>
        <svg className="mt-[5px] ml-[12px] block h-[9px] w-[21px]" viewBox="0 0 21 9"><rect x="1" y="1" width="19" height="7" rx="1" fill="#f5f7fb" stroke="#4d5563" strokeWidth="1.500" /></svg>
        <svg className="ml-[14px] block h-[21px] w-[23px]" viewBox="0 0 23 21"><path d="M9 1h13v11H9z" fill="#f5f7fb" stroke="#4d5563" strokeWidth="1.700" /><path d="M1 8h13v12H1z" fill="#f5f7fb" stroke="#4d5563" strokeWidth="1.700" /><path d="M5 13h5v3H5z" fill="#bccde6" stroke="#4d5563" strokeWidth="1.400" /></svg>
        <svg className="ml-[15px] block h-[17px] w-[20px]" viewBox="0 0 20 17"><path d="M1 1h5l4 4 4-4h5v3l-4 4.500 4 4.500v3h-5l-4-4-4 4H1v-3l4-4.500L1 4z" fill="#f5f7fb" stroke="#4d5563" strokeWidth="1.500" /></svg>
      </div>
    </div>
  );
}

function TitleBar() {
  return (
    <div className="flex h-[40px] items-start">
      <svg className="mt-[4px] ml-[2px] block h-[21px] w-[22px]" viewBox="0 0 22 21">
        <path d="M.7 2Q1 .7 3 .7h16V19.500H.7z" fill="#f1faee" stroke="#2e7d3c" strokeWidth="1.400" />
        <path d="M13 3h4v7h-4z" fill="#b5dfae" />
        <path d="M3 3h4l3 4 3-4h3l-4 6 4 6h-4l-3-4-4 4H2l5-6z" fill="#35933a" />
        <path d="M11 12l9-2M12 14l9-2M12 17h8" stroke="#9cc79b" />
      </svg>
      <div className="mt-[7px] ml-[534px] w-[494px] text-center text-[18px] leading-[26px] tracking-[0.430px] whitespace-pre text-[#1e3c63]">attendees_en.xls  [Compatibility Mode] - Microsoft Excel</div>
      <div className="flex-1" />
      <div className="mt-[14px] mr-[6px] flex">
        <svg className="mt-[4px] block h-[6px] w-[12px]" viewBox="0 0 12 6"><rect x=".7" y=".7" width="10" height="4" fill="#fff" stroke="#596273" /></svg>
        <svg className="ml-[13px] block h-[10px] w-[12px]" viewBox="0 0 12 10"><rect x=".7" y=".7" width="10.500" height="8.500" fill="#fff" stroke="#596273" strokeWidth="1.200" /><rect x="3.700" y="3.700" width="4.500" height="2" fill="#bbd6ef" stroke="#596273" /></svg>
        <svg className="ml-[13px] block h-[10px] w-[12px]" viewBox="0 0 12 10"><path d="M.5.500h3L6 3 8.500.500h3V2L9 5l2.500 3v1.500h-3L6 7 3.500 9.500h-3V8L3 5 .5 2z" fill="#fff" stroke="#596273" /></svg>
      </div>
    </div>
  );
}

export default function App() {
  return (
    <div className={`relative h-[733px] w-[1617px] overflow-hidden bg-black ${ui}`}>
      <div className="flex h-[733px] w-[1617px] flex-col rounded-[6px] border border-[#8493aa] bg-[linear-gradient(#e8f0fb_0px,#c7d6f0_3px,#c7d6f0_14px,#bbd6ef_16px,#bbd6ef_31px,#bccee7_33px,#bccde6_86px,#c5dcf5_90px,#c5dcf5_733px)] px-[3px] pt-[2px]">
        <TitleBar />
        <TabRow />
        <div className="h-px bg-[#8faac8]" />
        <Ribbon />
        <div className="h-[4px] bg-[linear-gradient(#7592ad,#7d9db8_50%,#a9c4dd)]" />
        <QuickAccess />
        <FormulaBar />
        <div className="h-[3px] bg-[#e6f2fc]" />
        <div className="flex">
          <Sheet />
          <VScroll />
        </div>
        <SheetTabs />
        <div className="h-[3px] bg-[#829cc2]" />
        <StatusBar />
        <div className="h-px bg-[#6f8fb8]" />
      </div>
      <div className="absolute top-[337px] left-[43px] h-[26px] w-[332px] border-t border-r-[3px] border-b-[3px] border-l border-black" />
      <div className="absolute top-[359px] left-[371px] h-[5px] w-[5px] border-t border-l border-white bg-black" />
      <div className="absolute top-[316px] left-[25px] h-[92px] w-[1462px] rounded-[26px] border-[3px] border-[#f00]" />
      <div className="absolute top-[641px] left-[69px] h-[70px] w-[243px] rounded-[26px] border-[3px] border-[#f00]" />
    </div>
  );
}
